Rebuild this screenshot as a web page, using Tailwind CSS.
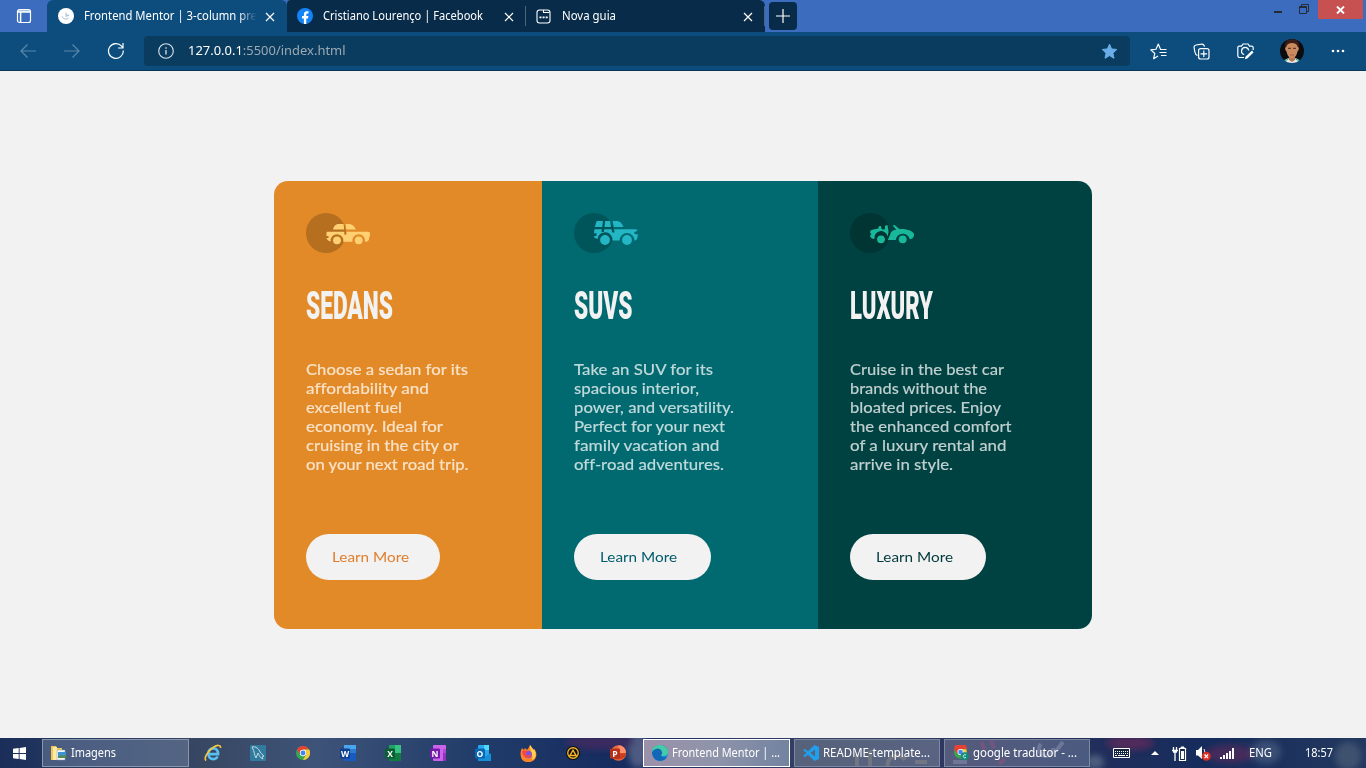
<!DOCTYPE html>
<html lang="pt">
<head>
<meta charset="utf-8">
<title>Frontend Mentor | 3-column preview card</title>
<script src="https://cdn.jsdelivr.net/npm/@tailwindcss/browser@4"></script>
</head>
<body class="w-[1366px] h-[768px] overflow-hidden flex flex-col bg-[#f2f2f2] font-['Noto_Sans','Open_Sans',sans-serif] text-white">

<!-- Tab strip -->
<header class="h-8 shrink-0 flex items-start bg-[#3b6cbd] relative text-[12px]">
  <div class="w-[47px] h-8 flex items-center justify-center">
    <svg width="16" height="16" viewBox="0 0 16 16" fill="none" stroke="#fff" stroke-width="1.2"><rect x="1.5" y="1.5" width="13" height="13" rx="2"/><path d="M2 4h12M4.6 4.500v10" stroke-width="1.5"/><path d="M2 3h12"/></svg>
  </div>
  <div class="w-[240px] h-8 bg-[#0d4d7e] rounded-t-md flex items-center pl-[11px]">
    <svg width="16" height="16" viewBox="0 0 16 16"><circle cx="8" cy="8" r="8" fill="#fff"/><path d="M4 8.200c.5 2.500 4.800 4 6.700 1.600M8 4.500v4l3-1.500M8.200 6.500l2.500 1" stroke="#9fb9cf" stroke-width=".9" fill="none"/></svg>
    <div class="ml-[10px] w-[172px] h-5 leading-5 overflow-hidden whitespace-nowrap mask-r-from-90%"><span class="fit inline-block origin-left" data-w="173">Frontend Mentor | 3-column pre</span></div>
    <svg class="ml-[9px] mt-px" width="10" height="10" viewBox="0 0 10 10" stroke="#fff" stroke-width="1.200"><path d="M1 1l8 8M9 1l-8 8"/></svg>
  </div>
  <div class="w-[239px] h-8 bg-[#082b49] flex items-center pl-[10px] rounded-tl-sm">
    <svg width="16" height="16" viewBox="0 0 16 16"><circle cx="8" cy="8" r="8" fill="#1384f5"/><path d="M6.900 16v-5.500H5V8h1.900V6.400c0-2.100 1.200-3.100 3-3.100.6 0 1.200.1 1.600.2v2h-1c-.9 0-1.200.5-1.200 1.200V8h2.100l-.4 2.500H9.300V16z" fill="#fff"/></svg>
    <div class="ml-[10px] w-[181px] whitespace-nowrap"><span class="fit inline-block origin-left" data-w="160">Cristiano Lourenço | Facebook</span></div>
    <svg class="mt-px" width="10" height="10" viewBox="0 0 10 10" stroke="#fff" stroke-width="1.200"><path d="M1 1l8 8M9 1l-8 8"/></svg>
  </div>
  <div class="w-[239px] h-8 bg-[#082b49] flex items-center rounded-tr-md">
    <div class="w-px h-5 bg-[#4c6579] mr-[10px] -ml-px"></div>
    <svg width="15" height="15" viewBox="0 0 15 15" fill="none" stroke="#fff" stroke-width="1.100"><rect x="1" y="1" width="13" height="13" rx="2.500"/><path d="M7.500 1v2.500h6"/><path d="M3.500 8.300h2M6.600 8.300h2M9.700 8.300h2" stroke-width="1.700"/></svg>
    <div class="ml-[11px] w-[181px] whitespace-nowrap"><span class="fit inline-block origin-left" data-w="54">Nova guia</span></div>
    <svg class="mt-px" width="10" height="10" viewBox="0 0 10 10" stroke="#fff" stroke-width="1.200"><path d="M1 1l8 8M9 1l-8 8"/></svg>
    <div class="w-px h-5 bg-[#4c6579] ml-[11px]"></div>
  </div>
  <div class="ml-1 mt-[2px] w-7 h-7 rounded-sm bg-[#082b49] flex items-center justify-center">
    <svg class="-ml-px" width="14" height="14" viewBox="0 0 14 14" stroke="#fff" stroke-width="1.200"><path d="M7 0v14M0 7h14"/></svg>
  </div>
  <div class="ml-auto flex items-start">
    <div class="w-2 h-[2px] bg-[#252a36] mt-[11px] mr-[17px]"></div>
    <svg class="mt-[4px] mr-[9px]" width="10" height="10" viewBox="0 0 10 10" fill="none" stroke="#252a36"><path d="M.5 2.500h7v7h-7zM.5 3.500h7M2.500 2.500v-2h7v7h-2"/></svg>
    <div class="w-[45px] h-[19px] bg-[#c75050] flex items-center justify-center mr-[3px]">
      <svg width="9" height="8" viewBox="0 0 9 8" stroke="#fff" stroke-width="1.900"><path d="M1 .5l7 7M8 .5l-7 7"/></svg>
    </div>
  </div>
</header>

<!-- Address bar -->
<div class="h-[39px] shrink-0 bg-[#0d4d7e] border-b border-[#0a3556] flex items-center">
  <svg class="ml-5" width="16" height="14" viewBox="0 0 16 14" fill="none" stroke="#5b87aa" stroke-width="1.200"><path d="M16 7H1M7.500.5L1 7l6.500 6.500"/></svg>
  <svg class="ml-7" width="16" height="14" viewBox="0 0 16 14" fill="none" stroke="#5b87aa" stroke-width="1.200"><path d="M0 7h15M8.500.5L15 7l-6.500 6.500"/></svg>
  <svg class="ml-[27px]" width="18" height="18" viewBox="0 0 18 18" fill="none" stroke="#fff" stroke-width="1.200"><path d="M16.300 8.500A7.400 7.400 0 1 1 14.600 4.200L16 5.800M16 1v5h-5"/></svg>
  <div class="ml-[19px] w-[986px] h-[30px] rounded bg-[#0a3c60] flex items-center pl-[14px] pr-3">
    <svg width="16" height="16" viewBox="0 0 16 16" fill="none" stroke="#d9e4ec" stroke-width="1.100"><circle cx="8" cy="8" r="7.300"/><path d="M8 7v4.500M8 4.200v1.500" stroke-width="1.300"/></svg>
    <div class="ml-[14px] text-[13px] whitespace-nowrap text-[#9ca9b3]"><span class="fit inline-block origin-left" data-w="157.500"><span class="text-white">127.0.0.1</span>:5500/index.html</span></div>
    <svg class="ml-auto" width="17" height="17" viewBox="0 0 17 17" fill="#69aee8"><path d="M8.500 1.200l2.100 4.700 5.200.6-3.900 3.600 1.100 5.200-4.500-2.700L4 15.300l1.100-5.200-3.900-3.600 5.200-.6z" stroke="#69aee8" stroke-linejoin="round"/></svg>
  </div>
  <svg class="ml-5" width="17" height="17" viewBox="0 0 17 17" fill="none" stroke="#fff" stroke-width="1.150" stroke-linejoin="round"><path d="M10.500 6.300L8.300 1 6 6.200.8 6.900l4 3.600-1.200 5.200L8 13"/><path d="M10 6.500h6.500M9.500 9.500h7M11 12.500h5.500"/></svg>
  <svg class="ml-[26px]" width="17" height="17" viewBox="0 0 17 17" fill="none" stroke="#fff" stroke-width="1.200"><rect x="5.600" y="5.600" width="10.400" height="10.400" rx="2"/><path d="M10.800 7.500v6.600M7.500 10.800h6.600M4.500 12.500C2.700 12 2.200 10.500 1.900 9L1.100 4.700C.8 3 1.500 2.300 3 2L8.500 1.100c1.600-.3 2.500.5 3 2.500"/></svg>
  <svg class="ml-[27px]" width="17" height="17" viewBox="0 0 17 17" fill="none" stroke="#fff" stroke-width="1.200"><path d="M7 14.500H2.500C1.300 14.500.8 14 .8 12.800V4.600c0-1 .5-1.500 1.500-1.500H4.500L6 1h5l1.500 2.100h2c1.100 0 1.700.5 1.700 1.600V7M11.700 7.500A3.600 3.600 0 1 0 7.200 11.500"/><path d="M15 7.500L8.500 13.800l-.7 2.400 2.500-.6 6.200-6.200z" fill="#fff" stroke="none"/></svg>
  <svg class="ml-[26px]" width="24" height="24" viewBox="0 0 24 24"><defs><clipPath id="av"><circle cx="12" cy="12" r="12"/></clipPath></defs><g clip-path="url(#av)"><rect width="24" height="24" fill="#0b0c10"/><path d="M3 24c1-4 5-5 9-5s8 1 9 5z" fill="#e9ecec"/><path d="M9 16h6v5l-3 2-3-2z" fill="#b5774f"/><path d="M5 10C4 3 7 0 12 0s8 3 7 10z" fill="#3a1d16"/><path d="M6.300 8C7 5 9 4 12 4s5 1 5.700 4c1.500 0 1.500 3.500-.1 4-.6 4-3 7.500-5.600 7.500S7 16 6.400 12c-1.500-.5-1.600-4-.1-4z" fill="#ca8a60"/><path d="M8 9.300h3M13 9.300h3" stroke="#4a291d" stroke-width="1"/><path d="M10 16h4" stroke="#a5634a"/><path d="M5 22l3-2M19 22l-3-2" stroke="#35b6a5" stroke-width="1.500"/></g></svg>
  <svg class="ml-[27px]" width="14" height="4" viewBox="0 0 14 4" fill="#fff"><circle cx="2" cy="2" r="1.300"/><circle cx="7" cy="2" r="1.300"/><circle cx="12" cy="2" r="1.300"/></svg>
</div>

<!-- Page -->
<main class="h-[667px] shrink-0 pt-[110px] bg-[#f2f2f2] font-['Lato',sans-serif] [font-variant-ligatures:none]">
  <div class="mx-auto w-[818px] h-[448px] rounded-[14px] overflow-hidden flex">
    <section class="w-[268px] bg-[#e28a27] px-8 pt-8 flex flex-col items-start">
      <svg width="64" height="40" viewBox="0 0 64 40"><circle cx="20" cy="20" r="20" fill="#b56f1f"/><g fill="#ffd071"><path d="M27 16.500C28 12.500 30 11 33 11h4.600l.6 5.500zM39.500 11h3c3.700 0 5.800 2.200 7.500 5.500h-9.600z"/><path d="M21.500 18.800h16.700l.3 3h2.100l-.3-3H62c1.500 0 2 .9 2 2v1.800c0 .8-.8 1-.8 2.100-.2 2.600-.9 3.700-3.500 4.100h-.7a6.400 6.400 0 1 0-12.600 0h-9.100a6.400 6.400 0 1 0-12.600-.3c-2.300-.5-3.900-1.500-4.100-3.500h1.900v-2h-2c-.1-1.800-.2-4.200.7-4.200z"/><circle cx="31" cy="27.300" r="3.900"/><circle cx="52.700" cy="27.300" r="3.900"/></g></svg>
      <h1 class="mt-[30px] h-[46px] leading-[46px] text-[39.500px] font-['Roboto'] font-black text-[#f2f2f2] whitespace-nowrap"><span class="fit inline-block origin-left" data-w="87">SEDANS</span></h1>
      <p class="mt-[31px] h-[114px] flex flex-col items-start text-[15px] leading-[19px] font-medium [-webkit-text-stroke:0.1px] text-[#f9e1c7] whitespace-nowrap"><span class="fit block origin-left" data-w="162">Choose a sedan for its</span><span class="fit block origin-left" data-w="123">affordability and</span><span class="fit block origin-left" data-w="96">excellent fuel</span><span class="fit block origin-left" data-w="137">economy. Ideal for</span><span class="fit block origin-left" data-w="152.500">cruising in the city or</span><span class="fit block origin-left" data-w="162.500">on your next road trip.</span></p>
      <a class="mt-[60px] w-[134px] h-[46px] rounded-full bg-[#f2f2f2] pl-[26px] leading-[46px] text-[14px] text-[#e07f2d] whitespace-nowrap"><span class="fit inline-block origin-left" data-w="77">Learn More</span></a>
    </section>
    <section class="w-[276px] bg-[#006a70] px-8 pt-8 flex flex-col items-start">
      <svg width="64" height="40" viewBox="0 0 64 40"><circle cx="20" cy="20" r="20" fill="#00555a"/><g fill="#24b6c5"><path d="M22.700 8h6.200l-.7 6h-7.400zM31.200 8h5l.8 6h-6.500zM38.700 8h3.600c3.800 0 5.700 2.200 7.200 6h-9.700z"/><path d="M20.500 16.300h7.300l-.3 2.600h2.300l.5-2.600h7.200l.7 3.300h2.400l-.5-3.300h20c2.200 0 3.300.3 3.300 1.200l-3.500 2.300c.5 1 2 1.500 4 1.500-.3 3.900-.8 6-3.200 6.200h-.3a7.400 7.400 0 1 0-14.800 0h-7.200a7.400 7.400 0 1 0-14.800-1.700c-2.300-.3-3.600-1.200-3.600-2.900h2.500v-2.600h-2.500z"/><circle cx="31" cy="27" r="4.900"/><circle cx="53" cy="27" r="4.900"/></g></svg>
      <h1 class="mt-[30px] h-[46px] leading-[46px] text-[39.500px] font-['Roboto'] font-black text-[#f2f2f2] whitespace-nowrap"><span class="fit inline-block origin-left" data-w="58.500">SUVS</span></h1>
      <p class="mt-[31px] h-[114px] flex flex-col items-start text-[15px] leading-[19px] font-medium [-webkit-text-stroke:0.1px] text-[#bfd9db] whitespace-nowrap"><span class="fit block origin-left" data-w="139">Take an SUV for its</span><span class="fit block origin-left" data-w="125">spacious interior,</span><span class="fit block origin-left" data-w="160">power, and versatility.</span><span class="fit block origin-left" data-w="151">Perfect for your next</span><span class="fit block origin-left" data-w="145.500">family vacation and</span><span class="fit block origin-left" data-w="150">off-road adventures.</span></p>
      <a class="mt-[60px] w-[137px] h-[46px] rounded-full bg-[#f2f2f2] pl-[26px] leading-[46px] text-[14px] text-[#005c6c] whitespace-nowrap"><span class="fit inline-block origin-left" data-w="77">Learn More</span></a>
    </section>
    <section class="w-[274px] bg-[#004241] px-8 pt-8 flex flex-col items-start">
      <svg width="64" height="40" viewBox="0 0 64 40"><circle cx="20" cy="20" r="20" fill="#003534"/><g fill="#19b89b"><path d="M20.500 17.500c2.500-1.400 5.200-1 7.500-1.700.8-.8.600-2.800 1.700-2.800h1.300c.6 2 .2 3.200 1.600 3.500 1.500.2 2.300.2 2.300-1.500.2-1.600-.1-2.700 1.400-2.700h1.300l1 6.800-1.100 4.400a6.500 6.500 0 0 0-13 2.500c-2.100-.1-4.200-.8-4.500-3.400l1.700-1.500-1.600-.8z"/><path d="M37.800 27l3.200-7.500c1-1.900 3-2.600 5.400-2.800l-3.200-3.500c-.2-1.200 1-1.600 1.800-.9l4.300 3.700c6-.4 12.700 1 14.700 4.800 0 2.700-.4 5-4.200 5.500a7.100 7.100 0 0 0-14 .7z"/><circle cx="31" cy="26.300" r="3.900"/><circle cx="52.700" cy="26.300" r="3.900"/></g></svg>
      <h1 class="mt-[30px] h-[46px] leading-[46px] text-[39.500px] font-['Roboto'] font-black text-[#f2f2f2] whitespace-nowrap"><span class="fit inline-block origin-left" data-w="83">LUXURY</span></h1>
      <p class="mt-[31px] h-[114px] flex flex-col items-start text-[15px] leading-[19px] font-medium [-webkit-text-stroke:0.1px] text-[#bfcfcf] whitespace-nowrap"><span class="fit block origin-left" data-w="154">Cruise in the best car</span><span class="fit block origin-left" data-w="137">brands without the</span><span class="fit block origin-left" data-w="151">bloated prices. Enjoy</span><span class="fit block origin-left" data-w="161.500">the enhanced comfort</span><span class="fit block origin-left" data-w="156.500">of a luxury rental and</span><span class="fit block origin-left" data-w="103">arrive in style.</span></p>
      <a class="mt-[60px] w-[136px] h-[46px] rounded-full bg-[#f2f2f2] pl-[26px] leading-[46px] text-[14px] text-[#00383c] whitespace-nowrap"><span class="fit inline-block origin-left" data-w="77">Learn More</span></a>
    </section>
  </div>
</main>

<!-- Taskbar -->
<footer class="h-[30px] shrink-0 flex items-center text-[12px] bg-[#1d2e56] relative overflow-hidden">
  <!-- wallpaper seen through the bar -->
  <svg class="absolute inset-0" width="1366" height="30" viewBox="0 0 1366 30"><defs><linearGradient id="wp"><stop offset="0" stop-color="#1b2e5a"/><stop offset=".07" stop-color="#283b60"/><stop offset=".15" stop-color="#384863"/><stop offset=".23" stop-color="#3e5378"/><stop offset=".35" stop-color="#213c69"/><stop offset=".45" stop-color="#152c60"/><stop offset=".6" stop-color="#383f64"/><stop offset=".77" stop-color="#25305c"/><stop offset=".88" stop-color="#162c5c"/><stop offset="1" stop-color="#23395f"/></linearGradient><filter id="bl"><feGaussianBlur stdDeviation="3"/></filter></defs><rect width="1366" height="30" fill="url(#wp)"/><g filter="url(#bl)"><ellipse cx="638" cy="12" rx="10" ry="18" fill="#6f7897" opacity=".6"/><ellipse cx="600" cy="4" rx="35" ry="8" fill="#3b2a60"/><ellipse cx="1130" cy="5" rx="24" ry="7" fill="#69275d" opacity=".7"/><ellipse cx="1230" cy="16" rx="25" ry="9" fill="#592b5d" opacity=".7"/><ellipse cx="1266" cy="14" rx="15" ry="12" fill="#596c8e" opacity=".5"/><ellipse cx="1348" cy="18" rx="13" ry="14" fill="#52637b" opacity=".6"/><ellipse cx="1095" cy="24" rx="9" ry="7" fill="#6c8098" opacity=".6"/></g></svg>
  <div class="relative flex items-center w-full h-full">
    <svg class="ml-[13px]" width="13" height="13" viewBox="0 0 13 13" fill="#fff"><path d="M0 1.800L5.700 1v5.100H0zM6.600.9L13 0v6.100H6.600zM0 7h5.700v5.100L0 11.200zM6.600 7H13v6l-6.400-.9z"/></svg>
    <div class="ml-4 w-[147px] h-[28px] border border-[#8996ad] bg-[#7184a3]/50 flex items-center pl-[8px]">
      <svg width="16" height="16" viewBox="0 0 16 16"><path d="M0 1h5l1 2h5v12H0z" fill="#efc75b"/><path d="M2 2h4v13H2z" fill="#ffeaa0"/><path d="M6 5h8v10H6z" fill="#f3f7fa" stroke="#8aa3ae" stroke-width=".5"/><path d="M7 7h8v5H7z" fill="#3b94d1"/><path d="M7 12l3-2 2 1 3-1v3H7z" fill="#57894b"/></svg>
      <span class="ml-1 whitespace-nowrap"><span class="fit inline-block origin-left" data-w="45">Imagens</span></span>
    </div>
    <svg class="ml-[15px]" width="18" height="18" viewBox="0 0 18 18" fill="none"><path d="M13.500 12.500c-1 2-2.500 2.600-4.200 2.600-3 0-5-2.500-5-5.400 0-3 2-5.400 5-5.400 3.200 0 5 2.500 4.700 5.800H5" stroke="#58bff1" stroke-width="2.700"/><path d="M2.200 16.500C-.5 15 3 7.500 9 3.500 13 .8 17 .5 16.500 4" stroke="#f5c63e" stroke-width="1.600"/></svg>
    <svg class="ml-7" width="16" height="16" viewBox="0 0 16 16"><rect width="16" height="16" rx="1" fill="#317c9e"/><path d="M2 2c4-1 7 2 8 5 1 2 3 3 4 4l-2 1 1 2c-3-1-4-4-5-6l-2 5C4 10 5 7 2 2z" fill="none" stroke="#c2dce4"/></svg>
    <svg class="ml-[30px]" width="14" height="14" viewBox="0 0 16 16"><circle cx="8" cy="8" r="8" fill="#37a651"/><path d="M1 4a8 8 0 0 1 14 0H8L4.500 9z" fill="#e44235"/><path d="M15 4a8 8 0 0 1-7 12l3.500-6L8 4z" fill="#f9ca3d"/><circle cx="8" cy="8" r="3.600" fill="#fff"/><circle cx="8" cy="8" r="2.800" fill="#4084ee"/></svg>
    <svg class="ml-[30px]" width="16" height="16" viewBox="0 0 16 16"><rect x="4" width="12" height="16" rx="1" fill="#2b7cd3"/><path d="M4 0h12v4H4z" fill="#49a5ee"/><path d="M4 8h12v8H4z" fill="#185abd"/><rect y="3.500" width="10" height="10" rx="1" fill="#103f91"/><text x="5" y="11.500" text-anchor="middle" font-family="Open Sans" font-size="8.500" font-weight="700" fill="#fff">W</text></svg>
    <svg class="ml-[29px]" width="16" height="16" viewBox="0 0 16 16"><rect x="4" width="12" height="16" rx="1" fill="#21a366"/><path d="M10 0h6v8h-6z" fill="#33c481"/><path d="M4 8h12v8H4z" fill="#107c41"/><rect y="3.500" width="10" height="10" rx="1" fill="#0a5f32"/><text x="5" y="11.500" text-anchor="middle" font-family="Open Sans" font-size="8.500" font-weight="700" fill="#fff">X</text></svg>
    <svg class="ml-[29px]" width="16" height="16" viewBox="0 0 16 16"><rect x="3" width="13" height="16" rx="1" fill="#ca64ea"/><path d="M13 4h3v4h-3z" fill="#ae4bd5"/><path d="M13 8h3v8h-3z" fill="#9332bf"/><rect y="3.500" width="10" height="10" rx="1" fill="#7719aa"/><text x="5" y="11.500" text-anchor="middle" font-family="Open Sans" font-size="8.500" font-weight="700" fill="#fff">N</text></svg>
    <svg class="ml-[29px]" width="16" height="16" viewBox="0 0 16 16"><rect x="3" width="11" height="12" rx="1" fill="#28a8ea"/><path d="M9 0h5v5H9z" fill="#50d9ff"/><path d="M3 8l6.500 4L16 8v8H3z" fill="#148fd8"/><rect y="3.500" width="10" height="10" rx="1" fill="#0866b7"/><text x="5" y="11.500" text-anchor="middle" font-family="Open Sans" font-size="8.500" font-weight="700" fill="#fff">O</text></svg>
    <svg class="ml-[29px]" width="17" height="17" viewBox="0 0 17 17"><path d="M2 3l2 2 1-2 2 2c1-1 2-3 3-5 1 2 3 3 3 5l1-1c2 2 3 5 2 8-2 7-14 7-15 0C0 8 1 5 2 3z" fill="#ff8424"/><path d="M10 0c1 2 3 3 3 5l1-1c3 5 2 9-2 11C14 9 9 5 10 0z" fill="#ffd34a"/><circle cx="8.200" cy="9.500" r="3.700" fill="#7953df"/><path d="M2 6c3-2 5 0 6 1-2 0-3 2-1 3 2 1 4-1 4-2 1 4-3 6-6 4C3 11 2 9 2 6z" fill="#f5464b"/></svg>
    <svg class="ml-[29px]" width="14" height="14" viewBox="0 0 16 16"><circle cx="8" cy="8" r="8" fill="#0f0f10"/><circle cx="8" cy="8" r="6" fill="none" stroke="#f8b62c" stroke-width="1.500"/><path d="M8 4.800l3.500 6h-7z" fill="none" stroke="#f8b62c" stroke-width="1.600"/></svg>
    <svg class="ml-[30px]" width="16" height="16" viewBox="0 0 16 16"><circle cx="8.500" cy="8" r="7.700" fill="#ed6c47"/><path d="M8.500.3A7.700 7.700 0 0 1 16 8H8.500z" fill="#ff8f6b"/><path d="M16 8a7.700 7.700 0 0 1-15 1z" fill="#cb3d1d"/><rect y="3.500" width="10" height="10" rx="1" fill="#b7301a"/><text x="5" y="11.500" text-anchor="middle" font-family="Open Sans" font-size="8.500" font-weight="700" fill="#fff">P</text></svg>
    <div class="ml-[17px] w-[147px] h-[28px] border border-white bg-linear-to-r from-[#9b91a9] via-[#8e94aa] to-[#7283a0] flex items-center pl-2 shrink-0">
      <svg class="shrink-0" width="16" height="16" viewBox="0 0 16 16"><circle cx="8" cy="8" r="8" fill="#1683d5"/><path d="M0 7C2 1 9 2 11 7c1 2-2 2-2 4 1 2 4 2 6 1-2 4-8 5-12 2C1 12 0 9 0 7z" fill="#1466b7"/><path d="M0 7C0 2 4 0 8 0c5 0 8 4 8 7 0 4-3 4-6 4-2-1 1-2 0-4C8 2 3 3 0 7z" fill="#42cda8"/></svg>
      <span class="ml-1 whitespace-nowrap"><span class="fit inline-block origin-left" data-w="108">Frontend Mentor | ...</span></span>
    </div>
    <div class="ml-1 w-[146px] h-[28px] border border-[#7c899f] bg-linear-to-r from-[#56627a] to-[#596382] flex items-center pl-2 shrink-0 relative overflow-hidden">
      <svg class="absolute inset-0" width="144" height="26" viewBox="0 0 144 26"><g fill="none" stroke="#a39b86" stroke-width="4" opacity=".35"><path d="M75 10v16M62 14v12M94 30a9 9 0 0 1 16-10M120 22h12"/></g></svg>
      <svg class="relative shrink-0" width="16" height="16" viewBox="0 0 16 16"><path d="M11.500 0L16 2v12l-4.500 2L5 9.800 2 12 0 11l3.500-3L0 5l2-1 3 2.200zM12 4.500L7.500 8l4.500 3.500z" fill="#209fec"/></svg>
      <span class="relative ml-1 whitespace-nowrap"><span class="fit inline-block origin-left" data-w="107">README-template...</span></span>
    </div>
    <div class="ml-[4px] w-[146px] h-[28px] border border-[#7c899f] bg-linear-to-r from-[#555b7c] to-[#4b5a80] flex items-center pl-[9px] shrink-0 relative overflow-hidden">
      <svg class="absolute inset-0" width="144" height="26" viewBox="0 0 144 26"><g fill="none" stroke-width="4" opacity=".4"><path d="M36 2l4 7M46 0l3 8M54 24l6-5" stroke="#a2507f"/><path d="M96 4a7 7 0 1 0 12 4M118 2l-7 9M8 22h14" stroke="#9aa3bd"/></g></svg>
      <svg class="relative shrink-0" width="15" height="16" viewBox="0 0 16 16"><circle cx="7" cy="7" r="7" fill="#37a651"/><path d="M0 4a7 7 0 0 1 14 0H7L4 9z" fill="#e44235"/><path d="M13 4a7 7 0 0 1-4 9l2-4-3-5z" fill="#f9ca3d"/><circle cx="7" cy="7" r="3.300" fill="#fff"/><circle cx="7" cy="7" r="2.500" fill="#4084ee"/><circle cx="11.500" cy="11.500" r="4.300" fill="#16897b"/><path d="M12.800 10.300a1.700 1.700 0 1 0 0 2.400" fill="none" stroke="#d6fff2"/></svg>
      <span class="relative ml-1 whitespace-nowrap"><span class="fit inline-block origin-left" data-w="104">google tradutor - ...</span></span>
    </div>
    <svg class="ml-[23px] shrink-0" width="17" height="10" viewBox="0 0 17 10"><path d="M.5.5h16v9H.5z" fill="#152541" stroke="#fff"/><path d="M2 3.500h13M2 5.500h13" stroke="#fff" stroke-dasharray="1 1"/><path d="M2 7.500h2M5 7.500h7M13 7.500h2" stroke="#fff"/></svg>
    <svg class="ml-[21px] shrink-0" width="8" height="4" viewBox="0 0 8 4" fill="#fff"><path d="M0 4l4-4 4 4z"/></svg>
    <svg class="ml-[13px] shrink-0" width="15" height="15" viewBox="0 0 15 15" fill="none" stroke="#fff"><path d="M7.500 2.500h6v12h-6z" fill="#16264b" stroke-width="1.200"/><path d="M9 1h3v1H9z" fill="#fff"/><path d="M9 5h3v8H9z" fill="#fff" stroke="none"/><path d="M1.500 1v3M4.500 1v3M0 4.500h6M1 6h4M3 6v9" stroke-width="1.300"/></svg>
    <svg class="ml-[9px] shrink-0" width="15" height="15" viewBox="0 0 15 15"><path d="M0 4h2l4-4v13L2 9.500H0z" fill="#fff"/><path d="M8 3c1 2 1 5 0 7" stroke="#fff" fill="none"/><circle cx="10.300" cy="10.300" r="4.500" fill="#da2e20"/><path d="M8.500 8.500l3.600 3.600M12.100 8.500l-3.600 3.600" stroke="#fff" stroke-width="1.300"/></svg>
    <svg class="ml-[9px] shrink-0" width="15" height="11" viewBox="0 0 15 11" fill="#fff"><path d="M0 9h2v2H0zM3 7h2v4H3zM6 5h2v6H6zM9 3h2v8H9zM12 0h2v11h-2z"/></svg>
    <span class="ml-[14px] w-[56px] whitespace-nowrap shrink-0"><span class="fit inline-block origin-left" data-w="23">ENG</span></span>
    <span class="whitespace-nowrap"><span class="fit inline-block origin-left" data-w="28">18:57</span></span>
  </div>
</footer>

<script>
// Keep labels at their design widths whatever the installed font.
function fitLabels() {
  document.querySelectorAll('.fit').forEach(el => {
    el.style.transform = 'none';
    const r = document.createRange();
    r.selectNodeContents(el);
    const w = r.getBoundingClientRect().width;
    el.style.transform = 'scaleX(' + (parseFloat(el.dataset.w) / w) + ')';
  });
}
fitLabels();
window.addEventListener('load', () => { fitLabels(); requestAnimationFrame(fitLabels); });
document.fonts.ready.then(fitLabels);
</script>
</body>
</html>
